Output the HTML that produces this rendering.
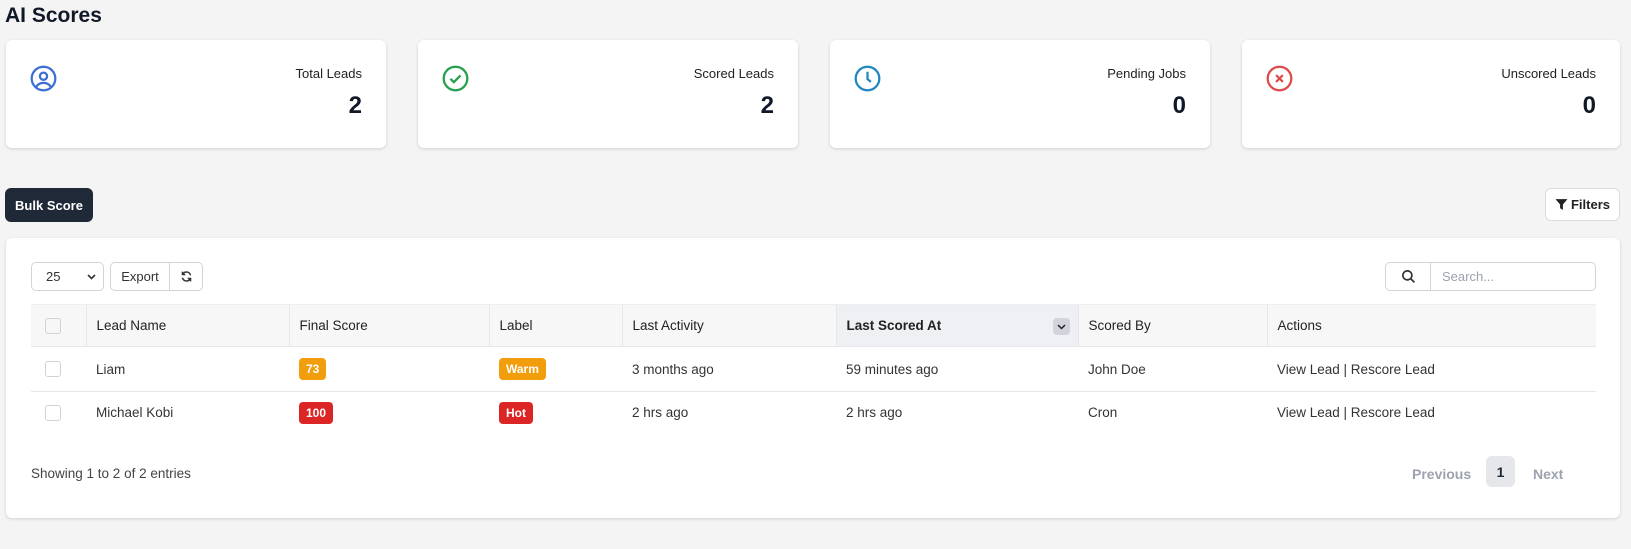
<!DOCTYPE html>
<html><head><meta charset="utf-8"><style>
*{box-sizing:border-box;margin:0;padding:0}
body{width:1631px;height:549px;background:#f4f4f4;font-family:"Liberation Sans",sans-serif;color:#1f2937;position:relative;overflow:hidden}
.abs{position:absolute}
h1{position:absolute;left:5px;top:4px;font-size:21px;font-weight:bold;color:#111827}
.card{position:absolute;top:40px;width:380px;height:108px;background:#fff;border-radius:6px;box-shadow:0 1px 3px rgba(0,0,0,.15)}
.card svg{position:absolute;left:24px;top:25px}
.card .lbl{position:absolute;right:24px;top:26px;font-size:13px;color:#222}
.card .num{position:absolute;right:24px;top:52px;font-size:24px;font-weight:bold;color:#111827}
.btn{position:absolute;border-radius:6px;font-size:13px;font-weight:bold;display:flex;align-items:center;justify-content:center}
.panel{position:absolute;left:6px;top:238px;width:1614px;height:280px;background:#fff;border-radius:6px;box-shadow:0 1px 3px rgba(0,0,0,.15)}
.ctl{position:absolute;border:1px solid #d1d5db;background:#fff;font-size:13px;color:#333;display:flex;align-items:center}
table{position:absolute;left:25px;top:66px;width:1565px;border-collapse:collapse;font-size:13.5px}
th{height:42px;background:#f7f7f8;text-align:left;font-weight:normal;color:#222;padding-left:10px;border-left:1px solid #e5e7eb;border-top:1px solid #eceef0;border-bottom:1px solid #e5e7eb}
td{padding-left:10px;color:#333;border-bottom:1px solid #e5e7eb}
tr.r1 td{height:45px}tr.r2 td{height:42px;border-bottom:none}
.cb{width:16px;height:16px;border:1px solid #cfd3d8;border-radius:3px;margin-left:4px}
.bd{display:inline-block;color:#fff;font-size:12px;font-weight:bold;padding:4px 7px;border-radius:4px}
</style></head><body>
<h1>AI Scores</h1>
<div class="card" style="left:6px"><svg width="27" height="27" viewBox="0 0 24 24" fill="none" stroke="#3b6fd4" stroke-width="2"><circle cx="12" cy="12" r="10.5"/><circle cx="12" cy="10" r="3.2"/><path d="M5.5 19.5c1.5-2.5 3.8-3.6 6.5-3.6s5 1.1 6.5 3.6"/></svg><div class="lbl">Total Leads</div><div class="num">2</div></div>
<div class="card" style="left:418px"><svg width="27" height="27" viewBox="0 0 24 24" fill="none" stroke="#22a04b" stroke-width="2"><circle cx="12" cy="12" r="10.5"/><path d="M7.5 12.3l3 3 6-6"/></svg><div class="lbl">Scored Leads</div><div class="num">2</div></div>
<div class="card" style="left:830px"><svg width="27" height="27" viewBox="0 0 24 24" fill="none" stroke="#1f86c0" stroke-width="2"><circle cx="12" cy="12" r="10.5"/><path d="M12 6v6.5l3 2.5"/></svg><div class="lbl">Pending Jobs</div><div class="num">0</div></div>
<div class="card" style="left:1242px;width:378px"><svg width="27" height="27" viewBox="0 0 24 24" fill="none" stroke="#dc4a4a" stroke-width="2"><circle cx="12" cy="12" r="10.5"/><path d="M9 9l6 6M15 9l-6 6"/></svg><div class="lbl">Unscored Leads</div><div class="num">0</div></div>
<div class="btn" style="left:5px;top:188px;width:88px;height:34px;background:#1f2937;color:#fff">Bulk Score</div>
<div class="btn" style="left:1545px;top:188px;width:75px;height:33px;background:#fff;border:1px solid #d8dbe0;color:#222"><svg width="13" height="13" viewBox="0 0 12 12" style="margin-right:3px"><path d="M0.5 1h11L7.3 6v5L4.7 9.5V6z" fill="#222"/></svg>Filters</div>
<div class="panel">
<div class="ctl" style="left:25px;top:24px;width:73px;height:29px;border-radius:5px;padding-left:14px">25<svg style="position:absolute;right:7px;top:11px" width="9" height="6" viewBox="0 0 9 6"><path d="M1 1l3.5 3.5L8 1" stroke="#333" stroke-width="1.6" fill="none"/></svg></div>
<div class="ctl" style="left:104px;top:24px;width:60px;height:29px;border-radius:5px 0 0 5px;justify-content:center">Export</div>
<div class="ctl" style="left:163px;top:24px;width:34px;height:29px;border-radius:0 5px 5px 0;justify-content:center"><svg width="13" height="13" viewBox="0 0 16 16" fill="none" stroke="#333" stroke-width="1.8"><path d="M13 6.5A5.2 5.2 0 0 0 3.5 5M3 9.5a5.2 5.2 0 0 0 9.5 1.5"/><path d="M3 2v3.5h3.5M13 14v-3.5H9.5"/></svg></div>
<div class="ctl" style="left:1379px;top:24px;width:46px;height:29px;border-radius:5px 0 0 5px;justify-content:center"><svg width="15" height="15" viewBox="0 0 16 16" fill="none" stroke="#333" stroke-width="1.8"><circle cx="6.8" cy="6.8" r="4.8"/><path d="M10.3 10.3l4 4"/></svg></div>
<div class="ctl" style="left:1424px;top:24px;width:166px;height:29px;border-radius:0 5px 5px 0;padding-left:11px;color:#9ca3af">Search...</div>
<table>
<tr><th style="width:55px;border-left:none"><div class="cb"></div></th><th style="width:203px">Lead Name</th><th style="width:200px">Final Score</th><th style="width:133px">Label</th><th style="width:214px">Last Activity</th><th style="width:242px;background:#eef0f3;font-weight:bold;position:relative">Last Scored At<span style="position:absolute;right:8px;top:13px;width:17px;height:17px;background:#d1d5db;border-radius:4px;display:flex;align-items:center;justify-content:center"><svg width="9" height="6" viewBox="0 0 9 6"><path d="M1 1l3.5 3.5L8 1" stroke="#222" stroke-width="1.5" fill="none"/></svg></span></th><th style="width:189px">Scored By</th><th>Actions</th></tr>
<tr class="r1"><td style="padding-left:10px"><div class="cb"></div></td><td>Liam</td><td><span class="bd" style="background:#f29d0b">73</span></td><td><span class="bd" style="background:#f29d0b">Warm</span></td><td>3 months ago</td><td>59 minutes ago</td><td>John Doe</td><td>View Lead | Rescore Lead</td></tr>
<tr class="r2"><td style="padding-left:10px"><div class="cb"></div></td><td>Michael Kobi</td><td><span class="bd" style="background:#dc2626">100</span></td><td><span class="bd" style="background:#dc2626">Hot</span></td><td>2 hrs ago</td><td>2 hrs ago</td><td>Cron</td><td>View Lead | Rescore Lead</td></tr>
</table>
<div class="abs" style="left:25px;top:228px;font-size:13.5px;color:#444">Showing 1 to 2 of 2 entries</div>
<div class="abs" style="left:1406px;top:228px;font-size:14px;font-weight:bold;color:#9ca3af">Previous</div>
<div class="abs" style="left:1480px;top:218px;width:29px;height:31px;background:#e5e7eb;border-radius:6px;font-size:14px;font-weight:bold;display:flex;align-items:center;justify-content:center">1</div>
<div class="abs" style="left:1527px;top:228px;font-size:14px;font-weight:bold;color:#9ca3af">Next</div>
</div>
</body></html>
